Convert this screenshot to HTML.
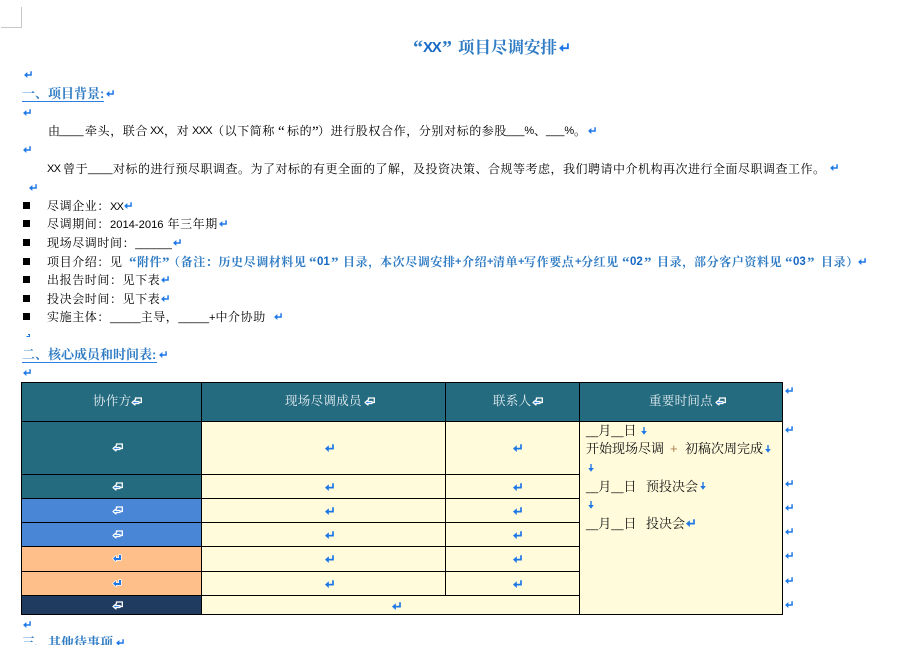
<!DOCTYPE html>
<html><head><meta charset="utf-8">
<style>
html,body{margin:0;padding:0;background:#fff;width:898px;height:645px;overflow:hidden}
body{position:relative;font-family:"Liberation Sans","Noto Serif CJK SC",serif;color:#000}
.t{position:absolute;white-space:nowrap;font-size:12px;line-height:16px;height:16px;letter-spacing:.6px}
.h{font-weight:700;color:#2f7cc4;font-size:13px;letter-spacing:0}
.b{color:#2f7cc4;font-weight:700}
.k{position:absolute;background:#000}
.c{position:absolute}
.w{color:#e6eff1;font-size:12.5px;letter-spacing:.3px}
.u{letter-spacing:0;font-size:11px}
.x{letter-spacing:-.7px;font-size:11px}
.n{letter-spacing:0;font-size:11.5px;color:#1769c4}
.q{font-family:"Liberation Serif",serif;font-size:15px;letter-spacing:0}
svg{position:absolute;overflow:visible}
.s{position:absolute;left:23px;width:7px;height:7px;background:#000}
.d{font-size:13px;letter-spacing:0;color:#111}
</style></head><body>
<svg width="0" height="0" style="left:0;top:0"><defs>
<symbol id="r" viewBox="0 0 9 8"><path d="M8 .3V4.6H3" fill="none" stroke="#1f78e6" stroke-width="1.7"/><path d="M0 4.6 3.8 1.2V8z" fill="#1f78e6"/></symbol>
<symbol id="l" viewBox="0 0 11 9"><path d="M4.5 3V1H10.3V5.5H7" fill="none" stroke="#fff" stroke-width="1.3"/><path d="M1 5.5 4 3V4.5H8V6.5H4V8z" fill="#1f78e6" stroke="#fff" stroke-width="1.2" stroke-linejoin="round"/></symbol>
<symbol id="o" viewBox="0 0 10 9"><path d="M7 1H9V6H4V7.5L1 4.5 4 2V4H7z" fill="#1f78e6" stroke="#fff" stroke-width="1.3" stroke-linejoin="round" paint-order="stroke"/></symbol>
<symbol id="v" viewBox="0 0 6 8"><path d="M3 0V5" stroke="#1f78e6" stroke-width="1.4"/><path d="M.2 4H5.8L3 7.8z" fill="#1f78e6"/></symbol>
</defs></svg>

<div class="c" style="left:21px;top:7px;width:1px;height:21px;background:#c8c8c8"></div>
<div class="c" style="left:1px;top:27px;width:20px;height:1px;background:#c8c8c8"></div>

<div class="t b" style="left:413px;top:38px;font-size:20px;line-height:20px;height:20px;letter-spacing:0;font-family:'Liberation Serif',serif">“</div>
<div class="t b" style="left:423px;top:38px;font-size:15px;line-height:20px;height:20px;letter-spacing:-1.2px;color:#1769c4">XX</div>
<div class="t b" style="left:442px;top:38px;font-size:20px;line-height:20px;height:20px;letter-spacing:0;font-family:'Liberation Serif',serif">”</div>
<div class="t b" style="left:458px;top:38px;font-size:16.5px;line-height:20px;height:20px;letter-spacing:0">项目尽调安排</div>
<svg style="left:559px;top:43px" width="10" height="9"><use href="#r" width="10" height="9"/></svg>
<svg style="left:24px;top:71px" width="8" height="7"><use href="#r" width="8" height="7"/></svg>

<div class="t h" style="left:22px;top:86px">一、项目背景:</div>
<div class="c" style="left:22px;top:101px;width:82px;height:1px;background:#2a7de1"></div>
<svg style="left:106px;top:90px" width="8" height="7"><use href="#r" width="8" height="7"/></svg>
<svg style="left:23px;top:109px" width="8" height="7"><use href="#r" width="8" height="7"/></svg>

<div class="t" style="left:48px;top:123px">由</div>
<div class="t u" style="left:59px;top:123px">____</div>
<div class="t" style="left:85px;top:123px">牵头，联合</div>
<div class="t x" style="left:150px;top:123px">XX</div>
<div class="t" style="left:164px;top:123px">，对</div>
<div class="t x" style="left:192px;top:123px">XXX</div>
<div class="t" style="left:212px;top:123px">（以下简称</div>
<div class="t q" style="left:278px;top:124px">“</div>
<div class="t" style="left:287px;top:123px">标的</div>
<div class="t q" style="left:312px;top:124px">”</div>
<div class="t" style="left:318px;top:123px">）进行股权合作，分别对标的参股</div>
<div class="t u" style="left:506px;top:123px">___%</div>
<div class="t" style="left:534px;top:123px">、</div>
<div class="t u" style="left:546px;top:123px">___%</div>
<div class="t" style="left:574px;top:123px">。</div>
<svg style="left:588px;top:127px" width="8" height="7"><use href="#r" width="8" height="7"/></svg>
<svg style="left:23px;top:146px" width="8" height="7"><use href="#r" width="8" height="7"/></svg>

<div class="t x" style="left:47px;top:161px">XX</div>
<div class="t" style="left:63px;top:161px">曾于</div>
<div class="t u" style="left:88px;top:161px">____</div>
<div class="t" style="left:113px;top:161px;letter-spacing:.5px">对标的进行预尽职调查。为了对标的有更全面的了解，及投资决策、合规等考虑，我们聘请中介机构再次进行全面尽职调查工作。</div>
<svg style="left:830px;top:164px" width="8" height="7"><use href="#r" width="8" height="7"/></svg>
<svg style="left:29px;top:184px" width="8" height="7"><use href="#r" width="8" height="7"/></svg>

<div class="s" style="top:202px"></div>
<div class="t" style="left:47px;top:198px">尽调企业：<span class="x">XX</span></div>
<svg style="left:124px;top:202px" width="8" height="7"><use href="#r" width="8" height="7"/></svg>

<div class="s" style="top:220px"></div>
<div class="t" style="left:47px;top:216px">尽调期间：<span class="u" style="font-size:11.2px">2014-2016</span> 年三年期</div>
<svg style="left:219px;top:220px" width="8" height="7"><use href="#r" width="8" height="7"/></svg>

<div class="s" style="top:239px"></div>
<div class="t" style="left:47px;top:235px">现场尽调时间：<span class="u">______</span></div>
<svg style="left:173px;top:239px" width="8" height="7"><use href="#r" width="8" height="7"/></svg>

<div class="s" style="top:258px"></div>
<div class="t" style="left:47px;top:254px">项目介绍：见</div>
<div class="t q b" style="left:129px;top:255px">“</div>
<div class="t b" style="left:137px;top:254px">附件</div>
<div class="t q b" style="left:162px;top:255px">”</div>
<div class="t b" style="left:168px;top:254px">（备注：历史尽调材料见</div>
<div class="t q b" style="left:309px;top:255px">“</div>
<div class="t b n" style="left:317px;top:254px">01</div>
<div class="t q b" style="left:331px;top:255px">”</div>
<div class="t b" style="left:343px;top:254px">目录，</div>
<div class="t b" style="left:380px;top:254px">本次尽调安排</div>
<div class="t b u" style="left:455px;top:254px">+</div>
<div class="t b" style="left:462px;top:254px">介绍</div>
<div class="t b u" style="left:487px;top:254px">+</div>
<div class="t b" style="left:493px;top:254px">清单</div>
<div class="t b u" style="left:518px;top:254px">+</div>
<div class="t b" style="left:524px;top:254px">写作要点</div>
<div class="t b u" style="left:575px;top:254px">+</div>
<div class="t b" style="left:581px;top:254px">分红见</div>
<div class="t q b" style="left:622px;top:255px">“</div>
<div class="t b n" style="left:630px;top:254px">02</div>
<div class="t q b" style="left:644px;top:255px">”</div>
<div class="t b" style="left:657px;top:254px">目录，</div>
<div class="t b" style="left:694px;top:254px">部分客户资料见</div>
<div class="t q b" style="left:785px;top:255px">“</div>
<div class="t b n" style="left:793px;top:254px">03</div>
<div class="t q b" style="left:807px;top:255px">”</div>
<div class="t b" style="left:821px;top:254px">目录）</div>
<svg style="left:858px;top:258px" width="8" height="7"><use href="#r" width="8" height="7"/></svg>

<div class="s" style="top:276px"></div>
<div class="t" style="left:47px;top:272px">出报告时间：见下表</div>
<svg style="left:161px;top:276px" width="8" height="7"><use href="#r" width="8" height="7"/></svg>

<div class="s" style="top:295px"></div>
<div class="t" style="left:47px;top:291px">投决会时间：见下表</div>
<svg style="left:161px;top:295px" width="8" height="7"><use href="#r" width="8" height="7"/></svg>

<div class="s" style="top:313px"></div>
<div class="t" style="left:47px;top:309px">实施主体：<span class="u">_____</span>主导，<span class="u">_____+</span>中介协助</div>
<svg style="left:274px;top:313px" width="8" height="7"><use href="#r" width="8" height="7"/></svg>

<svg style="left:26px;top:334px" width="4" height="3"><path d="M2 .5H3.5V2.5H.5" fill="none" stroke="#1f78e6"/></svg>

<div class="t h" style="left:22px;top:347px">二、核心成员和时间表:</div>
<div class="c" style="left:22px;top:362px;width:135px;height:1px;background:#2a7de1"></div>
<svg style="left:159px;top:351px" width="8" height="7"><use href="#r" width="8" height="7"/></svg>
<svg style="left:23px;top:369px" width="8" height="7"><use href="#r" width="8" height="7"/></svg>

<!-- table fills -->
<div class="c" style="left:21px;top:382px;width:762px;height:39px;background:#256b80"></div>
<div class="c" style="left:21px;top:421px;width:180px;height:77px;background:#256b80"></div>
<div class="c" style="left:21px;top:498px;width:180px;height:48px;background:#4a86d6"></div>
<div class="c" style="left:21px;top:546px;width:180px;height:49px;background:#ffbf8b"></div>
<div class="c" style="left:21px;top:595px;width:180px;height:20px;background:#1f3b60"></div>
<div class="c" style="left:201px;top:421px;width:581px;height:194px;background:#fffbdb"></div>

<!-- table borders -->
<div class="k" style="left:21px;top:382px;width:762px;height:1px"></div>
<div class="k" style="left:21px;top:421px;width:762px;height:1px"></div>
<div class="k" style="left:21px;top:474px;width:558px;height:1px"></div>
<div class="k" style="left:21px;top:498px;width:558px;height:1px"></div>
<div class="k" style="left:21px;top:522px;width:558px;height:1px"></div>
<div class="k" style="left:21px;top:546px;width:558px;height:1px"></div>
<div class="k" style="left:21px;top:571px;width:558px;height:1px"></div>
<div class="k" style="left:21px;top:595px;width:558px;height:1px"></div>
<div class="k" style="left:21px;top:614px;width:762px;height:1px"></div>
<div class="k" style="left:21px;top:382px;width:1px;height:233px"></div>
<div class="k" style="left:201px;top:382px;width:1px;height:233px"></div>
<div class="k" style="left:445px;top:382px;width:1px;height:213px"></div>
<div class="k" style="left:579px;top:382px;width:1px;height:233px"></div>
<div class="k" style="left:782px;top:382px;width:1px;height:233px"></div>

<!-- header text -->
<div class="t w" style="left:93px;top:393px">协作方</div>
<svg style="left:131px;top:397px" width="11" height="9"><use href="#l" width="11" height="9"/></svg>
<div class="t w" style="left:285px;top:393px">现场尽调成员</div>
<svg style="left:364px;top:397px" width="11" height="9"><use href="#l" width="11" height="9"/></svg>
<div class="t w" style="left:493px;top:393px">联系人</div>
<svg style="left:532px;top:397px" width="11" height="9"><use href="#l" width="11" height="9"/></svg>
<div class="t w" style="left:649px;top:393px">重要时间点</div>
<svg style="left:715px;top:397px" width="11" height="9"><use href="#l" width="11" height="9"/></svg>

<!-- col 1 icons -->
<svg style="left:112px;top:443px" width="11" height="9"><use href="#l" width="11" height="9"/></svg>
<svg style="left:112px;top:482px" width="11" height="9"><use href="#l" width="11" height="9"/></svg>
<svg style="left:112px;top:506px" width="11" height="9"><use href="#l" width="11" height="9"/></svg>
<svg style="left:112px;top:530px" width="11" height="9"><use href="#l" width="11" height="9"/></svg>
<svg style="left:112px;top:554px" width="10" height="9"><use href="#o" width="10" height="9"/></svg>
<svg style="left:112px;top:579px" width="10" height="9"><use href="#o" width="10" height="9"/></svg>
<svg style="left:112px;top:601px" width="11" height="9"><use href="#l" width="11" height="9"/></svg>

<!-- col 2 icons -->
<svg style="left:325px;top:444px" width="9" height="8"><use href="#r" width="9" height="8"/></svg>
<svg style="left:325px;top:483px" width="9" height="8"><use href="#r" width="9" height="8"/></svg>
<svg style="left:325px;top:507px" width="9" height="8"><use href="#r" width="9" height="8"/></svg>
<svg style="left:325px;top:531px" width="9" height="8"><use href="#r" width="9" height="8"/></svg>
<svg style="left:325px;top:555px" width="9" height="8"><use href="#r" width="9" height="8"/></svg>
<svg style="left:325px;top:580px" width="9" height="8"><use href="#r" width="9" height="8"/></svg>
<svg style="left:392px;top:602px" width="9" height="8"><use href="#r" width="9" height="8"/></svg>

<!-- col 3 icons -->
<svg style="left:513px;top:444px" width="9" height="8"><use href="#r" width="9" height="8"/></svg>
<svg style="left:513px;top:483px" width="9" height="8"><use href="#r" width="9" height="8"/></svg>
<svg style="left:513px;top:507px" width="9" height="8"><use href="#r" width="9" height="8"/></svg>
<svg style="left:513px;top:531px" width="9" height="8"><use href="#r" width="9" height="8"/></svg>
<svg style="left:513px;top:555px" width="9" height="8"><use href="#r" width="9" height="8"/></svg>
<svg style="left:513px;top:580px" width="9" height="8"><use href="#r" width="9" height="8"/></svg>

<!-- col 4 text -->
<div class="t d" style="left:586px;top:423px"><span class="u">__</span>月<span class="u">__</span>日</div>
<svg style="left:641px;top:427px" width="6" height="8"><use href="#v" width="6" height="8"/></svg>
<div class="t d" style="left:586px;top:441px">开始现场尽调</div>
<div class="t d" style="left:670px;top:441px;color:#b08050">+</div>
<div class="t d" style="left:685px;top:441px">初稿次周完成</div>
<svg style="left:765px;top:445px" width="6" height="8"><use href="#v" width="6" height="8"/></svg>
<svg style="left:588px;top:464px" width="6" height="8"><use href="#v" width="6" height="8"/></svg>
<div class="t d" style="left:586px;top:479px"><span class="u">__</span>月<span class="u">__</span>日</div>
<div class="t d" style="left:646px;top:479px">预投决会</div>
<svg style="left:700px;top:482px" width="6" height="8"><use href="#v" width="6" height="8"/></svg>
<svg style="left:588px;top:501px" width="6" height="8"><use href="#v" width="6" height="8"/></svg>
<div class="t d" style="left:586px;top:516px"><span class="u">__</span>月<span class="u">__</span>日</div>
<div class="t d" style="left:646px;top:516px">投决会</div>
<svg style="left:686px;top:519px" width="9" height="8"><use href="#r" width="9" height="8"/></svg>

<!-- end of row marks -->
<svg style="left:785px;top:387px" width="8" height="7"><use href="#r" width="8" height="7"/></svg>
<svg style="left:785px;top:426px" width="8" height="7"><use href="#r" width="8" height="7"/></svg>
<svg style="left:785px;top:480px" width="8" height="7"><use href="#r" width="8" height="7"/></svg>
<svg style="left:785px;top:504px" width="8" height="7"><use href="#r" width="8" height="7"/></svg>
<svg style="left:785px;top:528px" width="8" height="7"><use href="#r" width="8" height="7"/></svg>
<svg style="left:785px;top:552px" width="8" height="7"><use href="#r" width="8" height="7"/></svg>
<svg style="left:785px;top:577px" width="8" height="7"><use href="#r" width="8" height="7"/></svg>
<svg style="left:785px;top:601px" width="8" height="7"><use href="#r" width="8" height="7"/></svg>

<svg style="left:23px;top:621px" width="8" height="7"><use href="#r" width="8" height="7"/></svg>
<div class="t h" style="left:22px;top:635px">三、其他待事项</div>
<svg style="left:116px;top:639px" width="8" height="7"><use href="#r" width="8" height="7"/></svg>
</body></html>
